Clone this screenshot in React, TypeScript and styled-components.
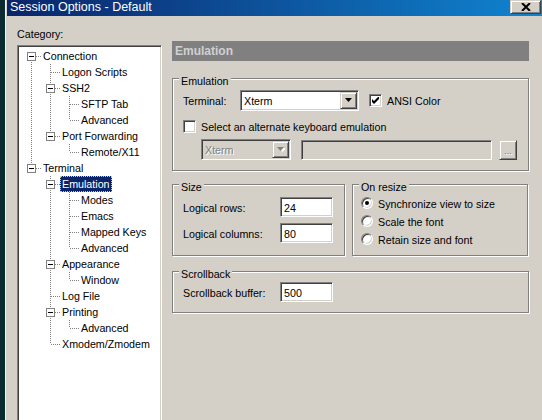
import styled, { createGlobalStyle } from 'styled-components';

const GlobalStyle = createGlobalStyle`
  html, body { margin: 0; padding: 0; }
  body {
    background: #0b2a31;
    font-family: "Liberation Sans", Arial, sans-serif;
    font-size: 10.7px;
    color: #000;
  }
  * { box-sizing: border-box; }
`;

const sunken = `
  border: 1px solid;
  border-color: #808080 #ffffff #ffffff #808080;
  box-shadow: inset 1px 1px 0 #404040, inset -1px -1px 0 #d4d0c8;
`;

const raised = `
  border: 1px solid;
  border-color: #d4d0c8 #404040 #404040 #d4d0c8;
  box-shadow: inset 1px 1px 0 #ffffff, inset -1px -1px 0 #808080;
`;

const Screen = styled.div`
  display: flex;
  width: 542px;
  height: 420px;
  overflow: hidden;
  background: #0b2a31;
`;

const Desktop = styled.div`
  width: 5px;
  flex: none;
`;

const Window = styled.div`
  flex: 1;
  min-width: 0;
  display: flex;
  flex-direction: column;
  background: #d4d0c8;
  border-left: 1px solid #f2f2f2;
  padding-left: 1px;
`;

const TitleBar = styled.div`
  height: 16px;
  flex: none;
  display: flex;
  align-items: flex-start;
  justify-content: space-between;
  background: linear-gradient(to right, #0a246a, #1084d0);
`;

const Title = styled.div`
  padding-left: 3px;
  color: #fff;
  font-size: 12.5px;
  line-height: 15px;
  white-space: nowrap;
`;

const CloseButton = styled.div`
  width: 31px;
  height: 14px;
  margin-right: 1px;
  display: flex;
  align-items: center;
  justify-content: center;
  background: #d4d0c8;
  ${raised}
`;

const Body = styled.div`
  display: flex;
  gap: 10px;
  padding: 1px 0 0 10px;
`;

const LeftCol = styled.div`
  width: 145px;
  display: flex;
  flex-direction: column;
`;

const CategoryLabel = styled.div`
  padding-top: 11px;
  line-height: 13px;
  margin-bottom: 4px;
`;

const Tree = styled.div`
  height: 390px;
  background: #fff;
  padding: 2px 0 0 4px;
  ${sunken}
`;

const TreeRow = styled.div`
  display: flex;
  height: 16px;
  align-items: center;
`;

const TreeLabel = styled.span<{ $selected?: boolean }>`
  height: 16px;
  line-height: 16px;
  padding: 0 2px;
  white-space: nowrap;
  color: ${p => (p.$selected ? '#fff' : '#000')};
  background: ${p => (p.$selected ? '#0a246a' : 'transparent')};
  outline: ${p => (p.$selected ? '1px dotted #d8d070' : 'none')};
  outline-offset: -1px;
`;

const RightCol = styled.div`
  width: 357px;
  margin-top: 24px;
  display: flex;
  flex-direction: column;
`;

const PageHeader = styled.div`
  height: 20px;
  line-height: 20px;
  padding-left: 3px;
  background: #808080;
  color: #d0d0d0;
  font-weight: bold;
  font-size: 12px;
`;

const Group = styled.div<{ $top: number; $height: number; $pad?: number }>`
  position: relative;
  width: 100%;
  margin-top: ${p => p.$top}px;
  height: ${p => p.$height}px;
  padding-left: ${p => p.$pad ?? 10}px;
  border: 1px solid #808080;
  box-shadow: inset 1px 1px 0 #fff, 1px 1px 0 #fff;
  display: flex;
  flex-direction: column;
`;

const Legend = styled.span`
  position: absolute;
  top: -5px;
  left: 6px;
  padding: 0 2px;
  line-height: 14px;
  background: #d4d0c8;
`;

const GroupPair = styled.div`
  display: grid;
  grid-template-columns: 173px 176px;
  column-gap: 7px;
  margin-top: 13px;
`;

const Row = styled.div<{ $top: number; $height: number; $indent?: number }>`
  display: flex;
  align-items: center;
  margin-top: ${p => p.$top}px;
  height: ${p => p.$height}px;
  padding-left: ${p => p.$indent ?? 0}px;
  white-space: nowrap;
`;

const FieldLabel = styled.span<{ $width: number }>`
  width: ${p => p.$width}px;
  flex: none;
  padding-top: 1px;
`;

const Combo = styled.div<{ $width: number; $disabled?: boolean }>`
  width: ${p => p.$width}px;
  height: 21px;
  padding: 1px;
  display: flex;
  align-items: center;
  background: ${p => (p.$disabled ? '#d4d0c8' : '#fff')};
  ${sunken}
`;

const ComboText = styled.span<{ $disabled?: boolean }>`
  flex: 1;
  padding-left: 2px;
  color: ${p => (p.$disabled ? '#808080' : '#000')};
  text-shadow: ${p => (p.$disabled ? '1px 1px 0 #fff' : 'none')};
`;

const DropButton = styled.div`
  width: 17px;
  height: 17px;
  display: flex;
  align-items: center;
  justify-content: center;
  background: #d4d0c8;
  ${raised}
`;

const TextBox = styled.div<{ $width: number; $disabled?: boolean }>`
  width: ${p => p.$width}px;
  height: 20px;
  padding: 2px 3px 0;
  line-height: 16px;
  background: ${p => (p.$disabled ? '#d4d0c8' : '#fff')};
  ${sunken}
`;

const Spacer = styled.span<{ $w: number }>`
  width: ${p => p.$w}px;
  flex: none;
`;

const SmallButton = styled.div`
  width: 18px;
  height: 20px;
  display: flex;
  align-items: flex-end;
  justify-content: center;
  padding-bottom: 3px;
  font-size: 9px;
  line-height: 9px;
  color: #808080;
  text-shadow: 1px 1px 0 #fff;
  background: #d4d0c8;
  ${raised}
`;

const CheckBox = styled.span`
  width: 13px;
  height: 13px;
  flex: none;
  display: flex;
  align-items: center;
  justify-content: center;
  background: #fff;
  ${sunken}
`;

const CheckLabel = styled.span`
  margin-left: 5px;
  padding-top: 1px;
`;

const Radio = styled.span`
  width: 12px;
  height: 12px;
  flex: none;
  border-radius: 50%;
  display: flex;
  align-items: center;
  justify-content: center;
  background: #fff;
  border: 1px solid;
  border-color: #808080 #ffffff #ffffff #808080;
  box-shadow: inset 1px 1px 0 #404040, inset -1px -1px 0 #d4d0c8;
`;

const RadioDot = styled.span`
  width: 4px;
  height: 4px;
  border-radius: 50%;
  background: #000;
`;

type Node = { label: string; children?: Node[]; selected?: boolean };
type Flat = {
  label: string;
  level: number;
  guides: boolean[];
  hasNext: boolean;
  hasChildren: boolean;
  first: boolean;
  selected?: boolean;
};

const categories: Node[] = [
  {
    label: 'Connection',
    children: [
      { label: 'Logon Scripts' },
      { label: 'SSH2', children: [{ label: 'SFTP Tab' }, { label: 'Advanced' }] },
      { label: 'Port Forwarding', children: [{ label: 'Remote/X11' }] },
    ],
  },
  {
    label: 'Terminal',
    children: [
      {
        label: 'Emulation',
        selected: true,
        children: [{ label: 'Modes' }, { label: 'Emacs' }, { label: 'Mapped Keys' }, { label: 'Advanced' }],
      },
      { label: 'Appearance', children: [{ label: 'Window' }] },
      { label: 'Log File' },
      { label: 'Printing', children: [{ label: 'Advanced' }] },
      { label: 'Xmodem/Zmodem' },
    ],
  },
];

const flatten = (nodes: Node[], level = 0, guides: boolean[] = [], out: Flat[] = []) => {
  nodes.forEach((n, i) => {
    const hasNext = i < nodes.length - 1;
    out.push({
      label: n.label,
      level,
      guides,
      hasNext,
      hasChildren: !!n.children,
      first: level === 0 && i === 0,
      selected: n.selected,
    });
    if (n.children) flatten(n.children, level + 1, [...guides, hasNext], out);
  });
  return out;
};

const dot = { stroke: '#808080', strokeWidth: 1, strokeDasharray: '1 1' };

const Guide = ({ on }: { on: boolean }) => (
  <svg width="19" height="16" viewBox="0 0 19 16" style={{ flex: 'none' }}>
    {on && <line x1="9.5" y1="0" x2="9.5" y2="16" {...dot} />}
  </svg>
);

const Branch = ({ up, down, box }: { up: boolean; down: boolean; box: boolean }) => (
  <svg width="19" height="16" viewBox="0 0 19 16" style={{ flex: 'none' }}>
    {up && <line x1="9.5" y1="0" x2="9.5" y2="8" {...dot} />}
    {down && <line x1="9.5" y1="8" x2="9.5" y2="16" {...dot} />}
    <line x1="10" y1="8.5" x2="19" y2="8.5" {...dot} />
    {box && (
      <>
        <rect x="5.5" y="4.5" width="8" height="8" fill="#fff" stroke="#808080" />
        <line x1="7" y1="8.5" x2="12" y2="8.5" stroke="#000" />
      </>
    )}
  </svg>
);

const Arrow = ({ disabled }: { disabled?: boolean }) => (
  <svg width="8" height="5" viewBox="0 0 8 5">
    {disabled && <path d="M2 1 H9 L5.5 5 Z" fill="#fff" />}
    <path d="M0 0 H7 L3.5 4 Z" fill={disabled ? '#808080' : '#000'} />
  </svg>
);

const Check = () => (
  <svg width="7" height="7" viewBox="0 0 7 7">
    <path d="M0 2 L2 4 L7 -1 L7 2 L2 7 L0 5 Z" fill="#000" />
  </svg>
);

const CloseGlyph = () => (
  <svg width="10" height="8" viewBox="0 0 10 8">
    <path d="M1 0 L9 8 M9 0 L1 8" stroke="#000" strokeWidth="2" />
  </svg>
);

export default function App() {
  const rows = flatten(categories);
  return (
    <>
      <GlobalStyle />
      <Screen>
        <Desktop />
        <Window>
          <TitleBar>
            <Title>Session Options - Default</Title>
            <CloseButton>
              <CloseGlyph />
            </CloseButton>
          </TitleBar>
          <Body>
            <LeftCol>
              <CategoryLabel>Category:</CategoryLabel>
              <Tree>
                {rows.map((r, i) => (
                  <TreeRow key={i}>
                    {r.guides.map((g, j) => (
                      <Guide key={j} on={g} />
                    ))}
                    <Branch up={!r.first} down={r.hasNext} box={r.hasChildren} />
                    <TreeLabel $selected={r.selected}>{r.label}</TreeLabel>
                  </TreeRow>
                ))}
              </Tree>
            </LeftCol>
            <RightCol>
              <PageHeader>Emulation</PageHeader>

              <Group $top={17} $height={93}>
                <Legend>Emulation</Legend>
                <Row $top={11} $height={21}>
                  <FieldLabel $width={57}>Terminal:</FieldLabel>
                  <Combo $width={119}>
                    <ComboText>Xterm</ComboText>
                    <DropButton>
                      <Arrow />
                    </DropButton>
                  </Combo>
                  <Spacer $w={10} />
                  <CheckBox>
                    <Check />
                  </CheckBox>
                  <CheckLabel>ANSI Color</CheckLabel>
                </Row>
                <Row $top={6} $height={19}>
                  <CheckBox />
                  <CheckLabel>Select an alternate keyboard emulation</CheckLabel>
                </Row>
                <Row $top={3} $height={21} $indent={18}>
                  <Combo $width={90} $disabled>
                    <ComboText $disabled>Xterm</ComboText>
                    <DropButton>
                      <Arrow disabled />
                    </DropButton>
                  </Combo>
                  <Spacer $w={10} />
                  <TextBox $width={191} $disabled />
                  <Spacer $w={7} />
                  <SmallButton>...</SmallButton>
                </Row>
              </Group>

              <GroupPair>
                <Group $top={0} $height={72}>
                  <Legend>Size</Legend>
                  <Row $top={12} $height={20}>
                    <FieldLabel $width={97}>Logical rows:</FieldLabel>
                    <TextBox $width={53}>24</TextBox>
                  </Row>
                  <Row $top={6} $height={20}>
                    <FieldLabel $width={97}>Logical columns:</FieldLabel>
                    <TextBox $width={53}>80</TextBox>
                  </Row>
                </Group>
                <Group $top={0} $height={72} $pad={8}>
                  <Legend>On resize</Legend>
                  <Row $top={9} $height={18}>
                    <Radio>
                      <RadioDot />
                    </Radio>
                    <CheckLabel>Synchronize view to size</CheckLabel>
                  </Row>
                  <Row $top={0} $height={18}>
                    <Radio />
                    <CheckLabel>Scale the font</CheckLabel>
                  </Row>
                  <Row $top={0} $height={18}>
                    <Radio />
                    <CheckLabel>Retain size and font</CheckLabel>
                  </Row>
                </Group>
              </GroupPair>

              <Group $top={15} $height={42}>
                <Legend>Scrollback</Legend>
                <Row $top={10} $height={20}>
                  <FieldLabel $width={97}>Scrollback buffer:</FieldLabel>
                  <TextBox $width={53}>500</TextBox>
                </Row>
              </Group>
            </RightCol>
          </Body>
        </Window>
      </Screen>
    </>
  );
}
